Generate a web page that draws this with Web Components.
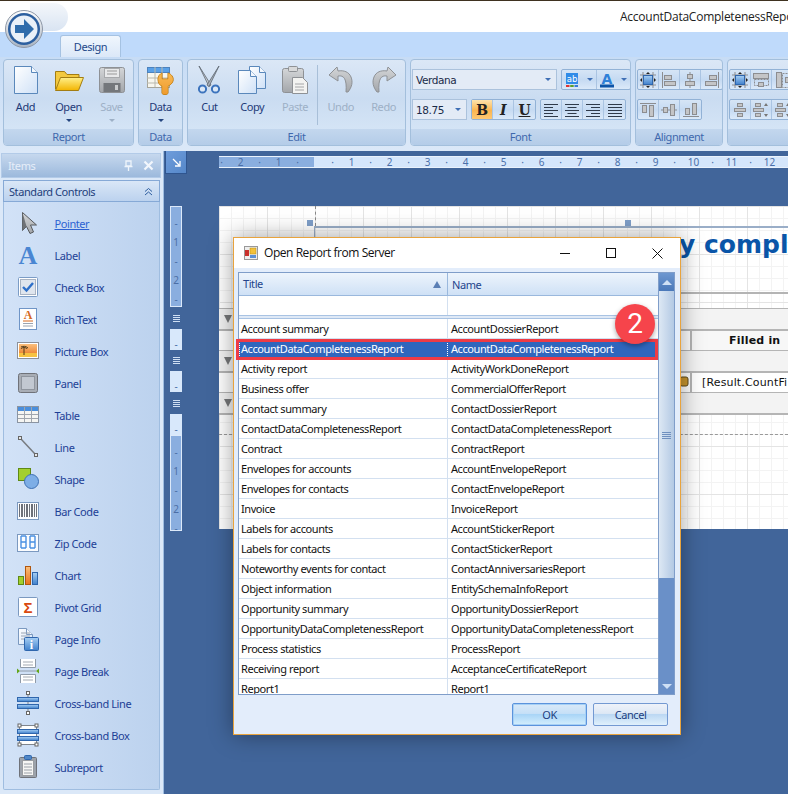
<!DOCTYPE html>
<html>
<head>
<meta charset="utf-8">
<title>Report designer</title>
<style>
  html, body { margin: 0; padding: 0; width: 788px; height: 794px; overflow: hidden; background: #41659a; }
  body { font: 11px "Noto Sans", sans-serif; letter-spacing: -.42px; }
</style>
</head>
<body>
<report-app></report-app>
<script>
const pageDefs = `<defs><linearGradient id="pg" x1="0" y1="0" x2="1" y2="1"><stop offset="0" stop-color="#fff"/><stop offset="1" stop-color="#cfe1f7"/></linearGradient><linearGradient id="gr" x1="0" y1="0" x2="0" y2="1"><stop offset="0" stop-color="#d4d6d8"/><stop offset="1" stop-color="#a3a6aa"/></linearGradient><linearGradient id="yl" x1="0" y1="0" x2="0" y2="1"><stop offset="0" stop-color="#fff08a"/><stop offset="1" stop-color="#f2b400"/></linearGradient><linearGradient id="bl" x1="0" y1="0" x2="0" y2="1"><stop offset="0" stop-color="#a8d0f5"/><stop offset="1" stop-color="#3f80cc"/></linearGradient><linearGradient id="or" x1="0" y1="0" x2="0" y2="1"><stop offset="0" stop-color="#fbbf7c"/><stop offset="1" stop-color="#e8721c"/></linearGradient></defs>`

const sv = (w, h, body) => `<svg xmlns="http://www.w3.org/2000/svg" width="${w}" height="${h}" viewBox="0 0 ${w} ${h}">${pageDefs}${body}</svg>`
const sheet = (x, y, w, h, s = '#5a88bb') => `<path d="M${x + .5} ${y + .5}h${w - 7}l6 6v${h - 7}h-${w - 1}z" fill="url(#pg)" stroke="${s}"/><path d="M${x + w - 6.5} ${y + .5}v6h6" fill="#f4f8fd" stroke="${s}"/>`
const box = (x, y, w, h, f = '#c4c5c7', s = '#8c8d90') => `<rect x="${x + .5}" y="${y + .5}" width="${w - 1}" height="${h - 1}" fill="${f}" stroke="${s}"/>`
const lines = (arr, x0 = 1, c = '#2f3a4a') => arr.map(([x, w], i) => `<rect x="${x0 + x}" y="${2 + i * 3}" width="${w}" height="1" fill="${c}"/>`).join('')
const dash = (x, y, w, h) => `<rect x="${x + .5}" y="${y + .5}" width="${w}" height="${h}" fill="none" stroke="#8c8d90" stroke-dasharray="2 1"/>`
const barLines = (c) => [2, 4, 5, 7, 9, 10, 12, 14, 15, 17, 19].map(x => `<rect x="${x + 1}" y="5" width="1" height="13" fill="${c}"/>`).join('')
const seg = (x) => `<path d="M${x} 5h5M${x} 11h5M${x} 17h5M${x} 5v12M${x + 5} 5v12" stroke="#4a90e2" stroke-width="1.4" fill="none"/>`

const ICONS = {
  add: sv(26, 30, sheet(1, 1, 24, 28)),
  open: sv(30, 26, `<path d="M1.5 22V4.5h9l2.5 3h12v3" fill="#f3c93f" stroke="#a37d12"/><path d="M6.5 10.5h23l-5 13h-23z" fill="url(#yl)" stroke="#a37d12"/>`),
  save: sv(28, 28, `<rect x="1.5" y="1.5" width="25" height="25" rx="2" fill="url(#gr)" stroke="#8e9195"/><rect x="6.5" y="2.5" width="15" height="9" fill="#e8e9ea" stroke="#a7a9ac"/><path d="M9 5h10M9 8h10" stroke="#999"/><rect x="5.5" y="17" width="17" height="9" fill="#74777b"/><rect x="17" y="19" width="3" height="5" fill="#c9cbcd"/>`),
  data: sv(30, 30, `<rect x="1.5" y="2.5" width="22" height="20" fill="#f8f7ef" stroke="#a6a59b"/><rect x="1.5" y="2.5" width="22" height="5" fill="#5aa1e8" stroke="#4d82bd"/><path d="M9 2v20M16 2v20M1 13h23M1 18h23" stroke="#b9b8ad"/><path d="M12 13c0-3 2-5 4-6v6h6V7c3 1 6 4 5 8-1 3-3 4-5 5v7c0 2-6 2-6 0v-7c-3-1-4-4-4-7z" fill="url(#or)" stroke="#b8720c" transform="translate(0 1)"/><path d="M12 13c0-3 2-5 4-6v6h6V7c3 1 6 4 5 8-1 3-3 4-5 5v7c0 2-6 2-6 0v-7c-3-1-4-4-4-7z" fill="#f5b63a" opacity=".6" transform="translate(0 1)"/>`),
  cut: sv(26, 30, `<path d="M3 1l12 19-2 1.500z" fill="#c9ced4" stroke="#5d6670" stroke-width=".8"/><path d="M23 1L11 20l2 1.500z" fill="#aab2bb" stroke="#5d6670" stroke-width=".8"/><circle cx="6.500" cy="24" r="3.600" fill="#dbe8f7" stroke="#3d74bd" stroke-width="2"/><circle cx="19.500" cy="24" r="3.600" fill="#dbe8f7" stroke="#3d74bd" stroke-width="2"/>`),
  copy: sv(30, 30, sheet(12, 1, 17, 23) + sheet(1, 5, 19, 24)),
  paste: sv(28, 30, `<rect x="1.500" y="3.500" width="21" height="24" rx="2" fill="url(#gr)" stroke="#8e9195"/><rect x="7.500" y="1.500" width="9" height="5" rx="1" fill="#d8d9da" stroke="#8e9195"/><path d="M11.500 12.500h10l5 5v11h-15z" fill="#f3f3f1" stroke="#8e9195"/><path d="M14 19h9M14 22h9M14 25h9" stroke="#a5a6a8"/>`),
  undo: sv(26, 28, `<path d="M9 1L1 9l9 6v-5c6-1 9 3 8 16h2c4-5 5-10 3-15-2-5-7-7-13-6z" fill="url(#gr)" stroke="#8e9195"/>`),
  redo: sv(26, 28, `<g transform="matrix(-1 0 0 1 26 0)"><path d="M9 1L1 9l9 6v-5c6-1 9 3 8 16h2c4-5 5-10 3-15-2-5-7-7-13-6z" fill="url(#gr)" stroke="#8e9195"/></g>`),

  pointer: sv(24, 24, `<path d="M6.500 1.500v18l4-4 3.500 7 3.500-1.500-3-7h6z" fill="url(#gr)" stroke="#55585c"/><path d="M6.500 1.500v18l4-4" fill="#6f7276"/>`),
  label: sv(24, 24, `<text x="12" y="21" text-anchor="middle" font-family="Liberation Serif, serif" font-weight="700" font-size="26" letter-spacing="0" fill="#4a86d2">A</text>`),
  check: sv(24, 24, `<rect x="2.500" y="2.500" width="19" height="19" rx="1" fill="#fff" stroke="#7b9cc6"/><rect x="4.500" y="4.500" width="15" height="15" fill="#dfe5ee" stroke="#a8b3c3"/><path d="M7 12l3.500 3.500L17 8" fill="none" stroke="#2d6fc9" stroke-width="2.400"/>`),
  rich: sv(24, 24, `<rect x="3.500" y="1.500" width="17" height="21" fill="#fff" stroke="#6f95c7"/><text x="12" y="12" text-anchor="middle" font-family="Liberation Serif, serif" font-weight="700" font-size="12" letter-spacing="0" fill="#d6691f">A</text><path d="M7 14h10" stroke="#d6691f"/><path d="M7 16.500h10M7 19h10" stroke="#9aa4b2"/>`),
  picture: sv(24, 24, `<rect x="1.500" y="3.500" width="21" height="16" fill="#fff" stroke="#8d9199"/><rect x="3" y="5" width="18" height="13" fill="url(#or)"/><rect x="3" y="14" width="18" height="4" fill="#f7c342"/><path d="M8 16V9M5 10c1-2 5-2 6 0M5 8c2-1 5-1 7 1" stroke="#4d3a1a" fill="none"/>`),
  panel: sv(24, 24, `<rect x="2.500" y="2.500" width="19" height="19" rx="2" fill="#a8adb5" stroke="#6f7279"/><rect x="5.500" y="5.500" width="13" height="13" fill="#c2c8d1" stroke="#8f959e"/>`),
  table: sv(24, 24, `<rect x="1.500" y="3.500" width="21" height="16" fill="#f5f5f2" stroke="#8a94a2"/><rect x="2" y="4" width="20" height="4" fill="#4a8fdd"/><path d="M8.500 4v15M15.500 4v15M2 11.500h20M2 15.500h20" stroke="#a0a6ae"/>`),
  line: sv(24, 24, `<path d="M5 4l14 15" stroke="#777b80" stroke-width="1.500"/><rect x="2.500" y="1.500" width="3" height="3" fill="#e8e8e8" stroke="#666"/><rect x="18.500" y="18.500" width="3" height="3" fill="#e8e8e8" stroke="#666"/>`),
  shape: sv(24, 24, `<rect x="2.500" y="1.500" width="12" height="12" fill="#a3cf2e" stroke="#5f8a14"/><circle cx="15.500" cy="14.500" r="7" fill="#7eaee6" stroke="#3e70b3"/>`),
  barcode: sv(24, 24, `<rect x="1.500" y="3.500" width="21" height="17" fill="#fbfcfe" stroke="#7b99c0"/>${barLines('#6d7078')}`),
  zip: sv(24, 24, `<rect x="1.500" y="3.500" width="21" height="17" fill="#fbfcfe" stroke="#7b99c0"/>${seg(5)}${seg(14)}`),
  chart: sv(24, 24, `<rect x="2.500" y="13.500" width="5" height="8" fill="#a3cf2e" stroke="#5f8a14"/><rect x="9.500" y="3.500" width="5" height="18" fill="url(#or)" stroke="#b0560e"/><rect x="16.500" y="9.500" width="5" height="12" fill="url(#bl)" stroke="#2f66ad"/>`),
  pivot: sv(24, 24, `<rect x="2.500" y="2.500" width="19" height="19" rx="1" fill="#fff" stroke="#7b99c0"/><text x="12" y="18" text-anchor="middle" font-family="Liberation Sans, sans-serif" font-weight="700" font-size="15" letter-spacing="0" fill="#d9480f">Σ</text>`),
  info: sv(24, 24, sheet(2, 1, 15, 17, '#7b99c0') + `<path d="M5 6h9M5 9h9M5 12h9" stroke="#9aa4b2"/><rect x="8.500" y="10.500" width="14" height="13" rx="1" fill="url(#bl)" stroke="#2f66ad"/><text x="15.500" y="21.500" text-anchor="middle" font-family="Liberation Serif, serif" font-weight="700" font-size="12" letter-spacing="0" fill="#fff">i</text>`),
  pagebreak: sv(24, 24, `<path d="M4.500 0v8.500h15V0" fill="#fff" stroke="#8f9aa8"/><path d="M7 3h10M7 6h10" stroke="#a3a9b1"/><path d="M4.500 24v-8.500h15V24" fill="#fff" stroke="#8f9aa8"/><path d="M7 18h10M7 21h10" stroke="#a3a9b1"/><path d="M1 9.500l3 2.500-3 2.500zM23 9.500l-3 2.500 3 2.500z" fill="#63a51a"/><path d="M4 12h16" stroke="#8f9aa8"/>`),
  crossline: sv(24, 24, `<path d="M12 3v18" stroke="#7f858d"/><rect x="10.500" y=".5" width="3" height="3" fill="#fff" stroke="#666"/><rect x="10.500" y="20.500" width="3" height="3" fill="#fff" stroke="#666"/><rect x="1.500" y="6.500" width="21" height="4" fill="url(#bl)" stroke="#2f66ad"/><rect x="1.500" y="13.500" width="21" height="4" fill="url(#bl)" stroke="#2f66ad"/>`),
  crossbox: sv(24, 24, `<path d="M3.500 2.500h17v19h-17z" fill="#fff" stroke="#7f858d"/><rect x="2" y="1" width="3" height="3" fill="#fff" stroke="#666"/><rect x="19" y="1" width="3" height="3" fill="#fff" stroke="#666"/><rect x="2" y="20" width="3" height="3" fill="#fff" stroke="#666"/><rect x="19" y="20" width="3" height="3" fill="#fff" stroke="#666"/><rect x="1.500" y="6.500" width="21" height="4" fill="url(#bl)" stroke="#2f66ad"/><rect x="1.500" y="13.500" width="21" height="4" fill="url(#bl)" stroke="#2f66ad"/>`),
  subreport: sv(24, 24, `<rect x="3.500" y="2.500" width="17" height="20" rx="1" fill="#9da3ab" stroke="#6f7279"/><rect x="6.500" y="5.500" width="11" height="15" fill="#f6f6f4" stroke="#9a9da1"/><rect x="8.500" y=".5" width="7" height="4" rx="1" fill="#4f86c6" stroke="#2f66ad"/><path d="M8 9h8M8 12h8M8 15h8M8 18h8" stroke="#9aa0a8"/>`),

  hilite: sv(16, 16, `<rect x="0" y="1" width="12" height="11" fill="#2f8be8"/><text x="6" y="9.500" text-anchor="middle" font-family="DejaVu Sans, sans-serif" font-size="8.500" letter-spacing="0" fill="#fff">ab</text><rect x="0" y="13" width="3.500" height="2" fill="#d33"/><rect x="4.200" y="13" width="3.500" height="2" fill="#5aa02c"/><rect x="8.500" y="13" width="3.500" height="2" fill="#3a7bd5"/>`),
  fontcolor: sv(16, 16, `<text x="7" y="11.500" text-anchor="middle" font-family="DejaVu Sans, sans-serif" font-weight="700" font-size="14" letter-spacing="0" fill="#2f80d8">A</text><rect x="0" y="12.500" width="14" height="3" fill="#0d54a8"/>`),
  left: sv(16, 16, lines([[0, 14], [0, 9], [0, 14], [0, 9], [0, 14]])),
  center: sv(16, 16, lines([[0, 14], [2.500, 9], [0, 14], [2.500, 9], [0, 14]])),
  right: sv(16, 16, lines([[0, 14], [5, 9], [0, 14], [5, 9], [0, 14]])),
  justify: sv(16, 16, lines([[0, 14], [0, 14], [0, 14], [0, 14], [0, 14]])),

  fit: sv(16, 16, `<path d="M3 0v16M13 0v16M0 3h16M0 13h16" stroke="#8c8d90"/><rect x="3.500" y="3.500" width="9" height="9" fill="url(#bl)" stroke="#2f66ad"/><path d="M8 0l-2 2h4zM8 16l-2-2h4zM0 8l2-2v4zM16 8l-2-2v4z" fill="#222"/>`),
  aleft: sv(16, 16, `<path d="M1.500 0v16" stroke="#8c8d90"/>${box(3, 3, 8, 5)}${box(3, 9, 12, 5)}`),
  acenter: sv(16, 16, `<path d="M8 0v16" stroke="#8c8d90"/>${box(5, 2, 6, 5)}${box(3, 9, 10, 5)}`),
  aright: sv(16, 16, `<path d="M14.500 0v16" stroke="#8c8d90"/>${box(5, 3, 8, 5)}${box(1, 9, 12, 5)}`),
  atop: sv(16, 16, `<path d="M0 1.500h16" stroke="#8c8d90"/>${box(2, 3, 5, 8)}${box(9, 3, 5, 12)}`),
  amid: sv(16, 16, `<path d="M0 8h16" stroke="#8c8d90"/>${box(2, 5, 5, 6)}${box(9, 2, 5, 12)}`),
  abottom: sv(16, 16, `<path d="M0 14.500h16" stroke="#8c8d90"/>${box(2, 6, 5, 7)}${box(9, 1, 5, 12)}`),
  samew: sv(16, 16, `${box(0, 1, 16, 6)}${dash(1, 7, 14, 6)}${box(5, 10, 6, 5)}`),
  sameh: sv(16, 16, `${box(1, 0, 6, 16)}${dash(7, 1, 7, 14)}${box(10, 5, 5, 6)}`),
  hs1: sv(16, 16, `${box(5, 1, 6, 4)}${box(2, 6, 12, 4)}${box(5, 11, 6, 4)}`),
  hs2: sv(16, 16, `${box(2, 1, 6, 4)}${box(0, 6, 11, 4)}${box(2, 11, 6, 4)}<path d="M13 1l-2 3h4zM13 15l-2-3h4z" fill="#777"/>`),
}

class XIcon extends HTMLElement {
  static tag = 'x-icon'
  constructor() {
    super()
    this.attachShadow({ mode: 'open' })
    this.shadowRoot.innerHTML = `<style>:host{display:inline-flex;align-items:center;justify-content:center;line-height:0}</style>${ICONS[this.getAttribute('name')] || ''}`
  }
}

class TitleBar extends HTMLElement {
  static tag = 'title-bar'
  static get style() {
    return /*css*/`
      :host { display: flex; height: 31px; background: #fff; border-top: 1px solid #3f3220; position: relative; align-items: center; padding-left: 620px; box-sizing: content-box; overflow: visible; }
      .text { font: 12px "Open Sans", sans-serif; letter-spacing: -.25px; color: #222; white-space: nowrap; overflow: hidden; }
      .glass { position: absolute; left: 30px; top: 2px; width: 38px; height: 28px; background: linear-gradient(#f4f7fb, #d9e4f2); border-radius: 0 16px 16px 0; }
      .orb { position: absolute; left: 5px; top: 9px; width: 38px; height: 38px; z-index: 2; }
    `
  }
  constructor() {
    super()
    this.attachShadow({ mode: 'open' })
    this.shadowRoot.innerHTML = /*html*/`
      <style>${TitleBar.style}</style>
      <div class="glass"></div>
      <svg class="orb" viewBox="0 0 38 38" width="38" height="38">
        <defs><linearGradient id="o" x1="0" y1="0" x2="0" y2="1"><stop offset="0" stop-color="#fff"/><stop offset="1" stop-color="#a9b4c2"/></linearGradient></defs>
        <circle cx="19" cy="19" r="18.500" fill="url(#o)" stroke="#8d97a6"/>
        <circle cx="19" cy="19" r="16" fill="#2c5f9f"/>
        <circle cx="19" cy="19" r="13.500" fill="#e9f0f8"/>
        <path d="M10 15h9V9l10 10-10 10v-6h-9z" fill="#2f6cab"/>
      </svg>
      <span class="text">AccountDataCompletenessReport</span>
    `
  }
}

class RibbonTabs extends HTMLElement {
  static tag = 'ribbon-tabs'
  constructor() {
    super()
    this.attachShadow({ mode: 'open' })
    this.shadowRoot.innerHTML = /*html*/`
      <style>
        :host { display: flex; height: 25px; background: #bfdafb; padding: 3px 0 0 60px; box-sizing: border-box; align-items: flex-end; }
        .tab { width: 61px; height: 22px; box-sizing: border-box; text-align: center; line-height: 21px; color: #23488a; background: linear-gradient(#f0f6fd, #dbe8f8); border: 1px solid #a5c2e2; border-bottom: 0; border-radius: 3px 3px 0 0; }
      </style>
      <div class="tab">Design</div>
    `
  }
}

class RibbonGroup extends HTMLElement {
  static tag = 'ribbon-group'
  constructor() {
    super()
    this.attachShadow({ mode: 'open' })
    this.shadowRoot.innerHTML = /*html*/`
      <style>
        :host { display: flex; flex-direction: column; flex: none; box-sizing: border-box; height: 87px; border: 1px solid #a3bfdc; border-radius: 4px; overflow: hidden; width: ${this.getAttribute('width')}px; background: linear-gradient(#dbe7f6 0, #cadcf1 45%, #d9e8f8 100%); }
        .body { flex: 1; display: flex; min-height: 0; padding: ${this.getAttribute('pad') || '0'}; }
        .cap { height: 16px; flex: none; background: linear-gradient(#c3d7ee, #b4cce8); text-align: center; line-height: 15px; color: #3f68ad; }
      </style>
      <div class="body"><slot></slot></div>
      <div class="cap">${this.getAttribute('label')}</div>
    `
  }
}

class RibbonButton extends HTMLElement {
  static tag = 'ribbon-button'
  constructor() {
    super()
    this.attachShadow({ mode: 'open' })
    const off = this.hasAttribute('disabled')
    this.shadowRoot.innerHTML = /*html*/`
      <style>
        :host { display: flex; flex-direction: column; align-items: center; width: ${this.getAttribute('width') || 43}px; padding-top: 5px; box-sizing: border-box; color: ${off ? '#9db0c6' : '#1e3a78'}; }
        .ic { height: 30px; display: flex; align-items: center; }
        .t { margin-top: 5px; line-height: 14px; }
        .a { margin-top: 5px; width: 0; height: 0; border: 3px solid transparent; border-top: 3px solid ${off ? '#9db0c6' : '#24457f'}; border-bottom: 0; }
      </style>
      <div class="ic"><x-icon name="${this.getAttribute('icon')}"></x-icon></div>
      <div class="t">${this.getAttribute('label')}</div>
      ${this.hasAttribute('arrow') ? '<div class="a"></div>' : ''}
    `
  }
}

class RibbonCombo extends HTMLElement {
  static tag = 'ribbon-combo'
  constructor() {
    super()
    this.attachShadow({ mode: 'open' })
    this.shadowRoot.innerHTML = /*html*/`
      <style>
        :host { display: flex; align-items: center; height: 21px; box-sizing: border-box; flex: none; width: ${this.getAttribute('width')}px; border: 1px solid #abc2dc; background: #e3ebf6; padding: 0 5px 0 3px; color: #1a2a48; font-family: "DejaVu Sans", sans-serif; letter-spacing: -.4px; }
        .v { flex: 1; font-size: 10.500px; }
        .a { width: 0; height: 0; border: 3px solid transparent; border-top: 3px solid #3f6fb5; border-bottom: 0; }
      </style>
      <span class="v">${this.getAttribute('value')}</span><span class="a"></span>
    `
  }
}

class ToolGroup extends HTMLElement {
  static tag = 'tool-group'
  constructor() {
    super()
    this.attachShadow({ mode: 'open' })
    this.shadowRoot.innerHTML = /*html*/`
      <style>
        :host { display: flex; flex: none; height: 21px; box-sizing: border-box; border: 1px solid #92b2d6; border-radius: 2px; background: linear-gradient(#d6e5f6, #c5daf2 50%, #dbe9f9); }
        ::slotted(tool-btn:not(:last-child)) { border-right: 1px solid #aac4e2; }
      </style>
      <slot></slot>
    `
  }
}

class ToolBtn extends HTMLElement {
  static tag = 'tool-btn'
  constructor() {
    super()
    this.attachShadow({ mode: 'open' })
    const w = this.getAttribute('width') || 21
    const caret = this.hasAttribute('caret') ? '<span class="a"></span>' : ''
    const glyph = this.getAttribute('glyph')
    this.shadowRoot.innerHTML = /*html*/`
      <style>
        :host { display: flex; align-items: center; justify-content: center; gap: 5px; width: ${w}px; flex: none; box-sizing: border-box; }
        :host([active]) { background: linear-gradient(#fde3ad, #fbb54f 55%, #fdc873); }
        .g { font: 700 14px "DejaVu Serif", "Liberation Serif", serif; color: #222; ${this.getAttribute('gs') || ''} }
        .a { width: 0; height: 0; border: 3px solid transparent; border-top: 3px solid #3f6fb5; border-bottom: 0; }
      </style>
      ${glyph ? `<span class="g">${glyph}</span>` : `<x-icon name="${this.getAttribute('icon')}"></x-icon>`}${caret}
    `
  }
}

class TheRibbon extends HTMLElement {
  static tag = 'the-ribbon'
  constructor() {
    super()
    this.attachShadow({ mode: 'open' })
    this.shadowRoot.innerHTML = /*html*/`
      <style>
        :host { display: flex; gap: 4px; height: 94px; box-sizing: border-box; padding: 2px 0 0 3px; overflow: hidden; background: linear-gradient(#c7dcf5, #dbe8f8); }
        .sep { width: 1px; margin: 5px 1px 4px 1px; background: #a8bfd8; flex: none; }
        .stack { display: flex; flex-direction: column; gap: 9px; padding: 9px 1px 0; }
        .row { display: flex; gap: 4px; }
      </style>
      <ribbon-group width="131" label="Report">
        <ribbon-button label="Add" icon="add"></ribbon-button>
        <ribbon-button label="Open" icon="open" arrow></ribbon-button>
        <ribbon-button label="Save" icon="save" arrow disabled></ribbon-button>
      </ribbon-group>
      <ribbon-group width="45" label="Data">
        <ribbon-button label="Data" icon="data" arrow></ribbon-button>
      </ribbon-group>
      <ribbon-group width="219" label="Edit">
        <ribbon-button label="Cut" icon="cut"></ribbon-button>
        <ribbon-button label="Copy" icon="copy"></ribbon-button>
        <ribbon-button label="Paste" icon="paste" disabled></ribbon-button>
        <div class="sep"></div>
        <ribbon-button label="Undo" icon="undo" disabled></ribbon-button>
        <ribbon-button label="Redo" icon="redo" disabled></ribbon-button>
      </ribbon-group>
      <ribbon-group width="221" label="Font">
        <div class="stack">
          <div class="row">
            <ribbon-combo width="145" value="Verdana"></ribbon-combo>
            <tool-group><tool-btn icon="hilite" width="35" caret></tool-btn><tool-btn icon="fontcolor" width="33" caret></tool-btn></tool-group>
          </div>
          <div class="row">
            <ribbon-combo width="55" value="18.75"></ribbon-combo>
            <tool-group><tool-btn glyph="B" active></tool-btn><tool-btn glyph="I" gs="font-style:italic"></tool-btn><tool-btn glyph="U" gs="text-decoration:underline"></tool-btn></tool-group>
            <tool-group><tool-btn icon="left"></tool-btn><tool-btn icon="center"></tool-btn><tool-btn icon="right"></tool-btn><tool-btn icon="justify"></tool-btn></tool-group>
          </div>
        </div>
      </ribbon-group>
      <ribbon-group width="88" label="Alignment">
        <div class="stack">
          <tool-group><tool-btn icon="fit"></tool-btn><tool-btn icon="aleft"></tool-btn><tool-btn icon="acenter"></tool-btn><tool-btn icon="aright"></tool-btn></tool-group>
          <div class="row"><tool-group><tool-btn icon="atop"></tool-btn><tool-btn icon="amid"></tool-btn><tool-btn icon="abottom"></tool-btn></tool-group></div>
        </div>
      </ribbon-group>
      <ribbon-group width="110" label="">
        <div class="stack">
          <tool-group><tool-btn icon="fit"></tool-btn><tool-btn icon="samew"></tool-btn><tool-btn icon="sameh"></tool-btn></tool-group>
          <tool-group><tool-btn icon="hs1"></tool-btn><tool-btn icon="hs2"></tool-btn><tool-btn icon="hs2"></tool-btn></tool-group>
        </div>
      </ribbon-group>
    `
  }
}

class ToolboxItem extends HTMLElement {
  static tag = 'toolbox-item'
  constructor() {
    super()
    this.attachShadow({ mode: 'open' })
    this.shadowRoot.innerHTML = /*html*/`
      <style>
        :host { display: flex; align-items: center; height: 32px; color: #1d3f96; }
        .ic { width: 24px; margin: 0 14.500px 0 12px; display: flex; }
        :host([current]) span { color: #2d62d2; text-decoration: underline; }
      </style>
      <div class="ic"><x-icon name="${this.getAttribute('icon')}"></x-icon></div><span><slot></slot></span>
    `
  }
}

class ToolboxPanel extends HTMLElement {
  static tag = 'toolbox-panel'
  static get items() {
    return [['pointer', 'Pointer'], ['label', 'Label'], ['check', 'Check Box'], ['rich', 'Rich Text'], ['picture', 'Picture Box'], ['panel', 'Panel'], ['table', 'Table'], ['line', 'Line'], ['shape', 'Shape'], ['barcode', 'Bar Code'], ['zip', 'Zip Code'], ['chart', 'Chart'], ['pivot', 'Pivot Grid'], ['info', 'Page Info'], ['pagebreak', 'Page Break'], ['crossline', 'Cross-band Line'], ['crossbox', 'Cross-band Box'], ['subreport', 'Subreport']]
  }
  constructor() {
    super()
    this.attachShadow({ mode: 'open' })
    const rows = ToolboxPanel.items.map(([ic, t], i) => `<toolbox-item icon="${ic}" ${i === 0 ? 'current' : ''}>${t}</toolbox-item>`).join('')
    this.shadowRoot.innerHTML = /*html*/`
      <style>
        :host { display: flex; flex-direction: column; flex: none; width: 164px; height: 100%; box-sizing: border-box; padding: 2px 2px 4px 1px; background: #dbe8f8; border-right: 1px solid #9fbde0; }
        .head { height: 25px; flex: none; display: flex; align-items: center; padding: 0 6px; color: #e6eef9; font-size: 11px; background: linear-gradient(#c6d8ee, #9cb9dc); border: 1px solid #b3cbe8; box-sizing: border-box; }
        .head span { flex: 1; }
        .head svg { margin-left: 9px; }
        .std { height: 22px; flex: none; margin: 2px 1px 0 2px; display: flex; align-items: center; padding: 0 6px 0 5px; box-sizing: border-box; color: #1e3f7c; background: linear-gradient(#dae7f7, #bcd2ee); border: 1px solid #86a9d6; }
        .std span { flex: 1; }
        .list { flex: 1; margin: 0 1px 0 2px; padding-top: 5px; box-sizing: border-box; border: 1px solid #9fbde0; border-top: 0; border-radius: 0 0 2px 2px; background: linear-gradient(90deg, #d2e2f7, #bcd2ee); }
      </style>
      <div class="head"><span>Items</span>
        <svg width="11" height="11" viewBox="0 0 11 11"><path d="M3 1h5v5H3zM1.500 6.500h8M5.500 7v4" fill="none" stroke="#eef4fb" stroke-width="1.300"/></svg>
        <svg width="11" height="11" viewBox="0 0 11 11"><path d="M1.500 1.500l8 8M9.500 1.500l-8 8" stroke="#f2f6fc" stroke-width="2.200"/></svg>
      </div>
      <div class="std"><span>Standard Controls</span>
        <svg width="9" height="9" viewBox="0 0 9 9"><path d="M1 4.500l3.500-3 3.500 3M1 8l3.500-3 3.500 3" fill="none" stroke="#2d5d9f"/></svg>
      </div>
      <div class="list">${rows}</div>
    `
  }
}

class HRuler extends HTMLElement {
  static tag = 'h-ruler'
  constructor() {
    super()
    this.attachShadow({ mode: 'open' })
    const cell = (t) => `<i>${t}</i>`
    const before = ['·', '2', '·', '1', '·'].map(cell).join('')
    let after = ''
    for (let n = 1; n <= 12; n++) after += cell('·') + cell(n)
    this.shadowRoot.innerHTML = /*html*/`
      <style>
        :host { display: flex; height: 12px; flex: none; overflow: hidden; box-sizing: border-box; border-top: 1px solid #eaf2fc; border-bottom: 1px solid #eaf2fc; font: 10px "Noto Sans", sans-serif; color: #4a6ea8; letter-spacing: 0; }
        .a { width: 95px; flex: none; display: flex; justify-content: flex-end; padding-right: 7px; box-sizing: border-box; background: #8aaedf; color: #4c6ea6; }
        .b { flex: 1; display: flex; padding-left: 9px; background: #d5e6fb; }
        i { font-style: normal; width: 19px; flex: none; text-align: center; line-height: 10px; }
      </style>
      <div class="a">${before}</div><div class="b">${after}</div>
    `
  }
}

class VRuler extends HTMLElement {
  static tag = 'v-ruler'
  constructor() {
    super()
    this.attachShadow({ mode: 'open' })
    const marks = ['-', '1', '-', '2', '-'].map(t => `<i>${t}</i>`).join('')
    const grip = `<div class="grip"><b></b><b></b><b></b><b></b></div>`
    this.shadowRoot.innerHTML = /*html*/`
      <style>
        :host { display: flex; flex-direction: column; width: 12px; flex: none; font: 10px "Noto Sans", sans-serif; color: #4c6ea6; }
        .blue { background: #8aaedf; box-sizing: border-box; border: 1px solid #dce9f9; display: flex; flex-direction: column; }
        i { font-style: normal; height: 19px; flex: none; text-align: center; line-height: 19px; }
        .lite { height: 21px; background: #d8e8fb; text-align: center; line-height: 30px; }
        .grip { height: 22px; display: flex; flex-direction: column; gap: 1px; align-items: center; justify-content: center; }
        .grip.s { height: 21px; }
        .grip b { width: 7px; height: 1px; background: #cfdff3; }
      </style>
      <div class="blue" style="height:101px;padding-top:7px">${marks}</div>
      ${grip}
      <div class="lite">-</div>
      <div class="grip s"><b></b><b></b><b></b><b></b></div>
      <div class="lite">-</div>
      ${grip}
      <div class="lite">-</div>
      <div class="blue" style="height:96px;padding-top:7px">${marks}</div>
    `
  }
}

class ReportPage extends HTMLElement {
  static tag = 'report-page'
  static get style() {
    return /*css*/`
      :host { display: block; flex: 1; height: 323px; position: relative; overflow: hidden; background-color: #fff; background-image:
        linear-gradient(90deg, #e4e4e4 1px, transparent 1px), linear-gradient(#e4e4e4 1px, transparent 1px),
        linear-gradient(90deg, #f3f3f3 1px, transparent 1px), linear-gradient(#f3f3f3 1px, transparent 1px);
        background-size: 48px 48px, 48px 48px, 12px 12px, 12px 12px; }
      .titlebox { position: absolute; left: 95px; top: 20px; right: -4px; height: 68px; box-sizing: border-box; border: 1px solid #9aaec8; border-bottom: 2px solid #b4b4b4; border-top-width: 2px; }
      .title { position: absolute; left: 460px; top: 21px; font: 700 25px/36px "DejaVu Sans", sans-serif; letter-spacing: 0; color: #0a55a8; white-space: nowrap; }
      .h { position: absolute; width: 6px; height: 6px; top: 14px; background: #7f9fc9; }
      .dash { position: absolute; left: 96px; top: 0; height: 20px; border-left: 1px dashed #888; }
      .bands { position: absolute; left: 0; right: 0; top: 102px; }
      .band { height: 20px; background: #f3f3f3; border-top: 1px solid #b5b5b5; position: relative; }
      .tri { position: absolute; left: 5px; top: 6px; width: 0; height: 0; border: 4px solid transparent; border-top: 8px solid #77787a; border-bottom: 0; }
      .row { background: #fff; border-top: 2px solid #b5b5b5; box-sizing: border-box; padding-left: 471px; display: flex; height: 21px; }
      .cell { flex: 1; border-left: 2px solid #b5b5b5; font: 11px/19px "DejaVu Sans", sans-serif; color: #111; white-space: nowrap; }
      .hd { font-weight: 700; letter-spacing: .2px; padding-left: 37px; background: #f7f7f7; }
      .dt { padding-left: 10px; letter-spacing: .15px; }
      .db { position: absolute; left: 460px; top: 3px; }
      .end { height: 0; border-top: 2px solid #b5b5b5; }
      .dashed { position: absolute; left: 0; right: 0; top: 228px; border-top: 1px dashed #999; }
    `
  }
  constructor() {
    super()
    this.attachShadow({ mode: 'open' })
    this.shadowRoot.innerHTML = /*html*/`
      <style>${ReportPage.style}</style>
      <div class="dash"></div>
      <div class="h" style="left:88px"></div><div class="h" style="left:406px"></div>
      <div class="titlebox"></div>
      <div class="title">y compl</div>
      <div class="bands">
        <div class="band"><i class="tri"></i></div>
        <div class="row"><div class="cell hd">Filled in</div></div>
        <div class="band"><i class="tri"></i></div>
        <div class="row" style="position:relative">
          <svg class="db" width="10" height="11" viewBox="0 0 10 11"><rect x="1" y="1" width="8" height="9" rx="2" fill="#c9962e" stroke="#5d4a1c"/></svg>
          <div class="cell dt">[Result.CountFi</div>
        </div>
        <div class="band"><i class="tri"></i></div>
        <div class="end"></div>
      </div>
      <div class="dashed"></div>
    `
  }
}

class DesignSurface extends HTMLElement {
  static tag = 'design-surface'
  constructor() {
    super()
    this.attachShadow({ mode: 'open' })
    this.shadowRoot.innerHTML = /*html*/`
      <style>
        :host { display: block; flex: 1; min-width: 0; background: #41659a; overflow: hidden; }
        .top { display: flex; height: 23px; padding-left: 1px; }
        .corner { width: 22px; height: 23px; box-sizing: border-box; flex: none; background: linear-gradient(135deg, #6e9cdb, #5587c9); border: 1px solid #2f558f; border-top: 0; display: flex; align-items: center; justify-content: center; }
        .top h-ruler { flex: 1; margin: 5px 0 0 32px; }
        .body { display: flex; margin-top: 32px; padding-left: 6px; gap: 37px; }
      </style>
      <div class="top">
        <div class="corner"><svg width="9" height="9" viewBox="0 0 9 9"><path d="M1 1l6 6M8 3v5H3" fill="none" stroke="#fff" stroke-width="1.300"/></svg></div>
        <h-ruler></h-ruler>
      </div>
      <div class="body"><v-ruler></v-ruler><report-page></report-page></div>
    `
  }
}

class GridRow extends HTMLElement {
  static tag = 'grid-row'
  constructor() {
    super()
    this.attachShadow({ mode: 'open' })
    this.shadowRoot.innerHTML = /*html*/`
      <style>
        :host { display: flex; height: 20px; box-sizing: border-box; border-bottom: 1px solid #d3e0f0; line-height: 19px; color: #111; flex: none; }
        :host([selected]) { background: #2f66bd; color: #fff; border-bottom-color: #2f66bd; }
        div { overflow: hidden; white-space: nowrap; box-sizing: border-box; }
        .a { width: 209px; padding-left: 2px; border-right: 1px solid #d3e0f0; }
        .b { flex: 1; padding-left: 3px; }
        :host([selected]) .a { border-left: 1px dotted #fff; padding-left: 1px; border-right: 1px dotted #fff; }
      </style>
      <div class="a">${this.getAttribute('title')}</div><div class="b">${this.getAttribute('name')}</div>
    `
  }
}

class DialogButton extends HTMLElement {
  static tag = 'dialog-button'
  constructor() {
    super()
    this.attachShadow({ mode: 'open' })
    this.shadowRoot.innerHTML = /*html*/`
      <style>
        :host { display: block; width: 75px; height: 23px; box-sizing: border-box; border: 1px solid #7399d2; border-radius: 2px; text-align: center; line-height: 21px; color: #22407f; background: linear-gradient(#eef2f9, #dde8f5 45%, #bcd8f3 50%, #dff0fc); }
        :host([primary]) { border: 1px solid #5b93dc; box-shadow: inset 0 0 0 1px #a6d0f5; background: linear-gradient(#d9e9f8, #c6e0f7 45%, #a9d5f7 50%, #d4effd); }
      </style>
      <slot></slot>
    `
  }
}

class ReportDialog extends HTMLElement {
  static tag = 'report-dialog'
  static get rows() {
    return [['Account summary', 'AccountDossierReport'], ['AccountDataCompletenessReport', 'AccountDataCompletenessReport'], ['Activity report', 'ActivityWorkDoneReport'], ['Business offer', 'CommercialOfferReport'], ['Contact summary', 'ContactDossierReport'], ['ContactDataCompletenessReport', 'ContactDataCompletenessReport'], ['Contract', 'ContractReport'], ['Envelopes for accounts', 'AccountEnvelopeReport'], ['Envelopes for contacts', 'ContactEnvelopeReport'], ['Invoice', 'InvoiceReport'], ['Labels for accounts', 'AccountStickerReport'], ['Labels for contacts', 'ContactStickerReport'], ['Noteworthy events for contact', 'ContactAnniversariesReport'], ['Object information', 'EntitySchemaInfoReport'], ['Opportunity summary', 'OpportunityDossierReport'], ['OpportunityDataCompletenessReport', 'OpportunityDataCompletenessReport'], ['Process statistics', 'ProcessReport'], ['Receiving report', 'AcceptanceCertificateReport'], ['Report1', 'Report1']]
  }
  static get style() {
    return /*css*/`
      :host { position: absolute; left: 233px; top: 237px; width: 448px; height: 498px; box-sizing: border-box; border: 1px solid #e8a33d; background: #e3edfb; box-shadow: 0 0 22px rgba(0, 0, 0, .38); display: flex; flex-direction: column; z-index: 5; }
      .cap { height: 30px; flex: none; background: #fff; display: flex; align-items: center; padding-left: 10px; font: 12px "Open Sans", sans-serif; letter-spacing: -.45px; color: #111; }
      .cap .t { flex: 1; margin: -1px 0 0 6px; }
      .win { width: 46px; height: 30px; display: flex; align-items: center; justify-content: center; }
      .grid { margin: 4px 5px 0 4px; height: 423px; flex: none; box-sizing: border-box; border: 1px solid #7f9dc9; display: flex; background: #fff; }
      .table { flex: 1; min-width: 0; display: flex; flex-direction: column; overflow: hidden; }
      .head { height: 23px; flex: none; display: flex; box-sizing: border-box; background: linear-gradient(#edf4fc, #cfe1f6); border-bottom: 1px solid #9ab8dd; color: #24458c; line-height: 24px; }
      .head div { box-sizing: border-box; }
      .head .a { width: 209px; padding-left: 4px; border-right: 1px solid #9ab8dd; display: flex; align-items: center; justify-content: space-between; padding-right: 6px; }
      .head .a i { width: 0; height: 0; border: 4px solid transparent; border-bottom: 7px solid #5b7fb5; border-top: 0; }
      .head .b { padding-left: 4px; }
      .filter { height: 19px; flex: none; box-sizing: border-box; }
      .filter div { width: 209px; height: 100%; box-sizing: border-box; border-right: 1px solid #d3e0f0; }
      .dbl { height: 4px; flex: none; box-sizing: border-box; background: #dfe9f6; border-top: 1px solid #a9c3e3; border-bottom: 1px solid #a9c3e3; }
      .sb { width: 16px; flex: none; display: flex; flex-direction: column; border-left: 1px solid #7f9dc9; box-sizing: border-box; }
      .up { height: 18px; background: linear-gradient(#6d97d0, #4a78b9); display: flex; align-items: center; justify-content: center; flex: none; }
      .up i { border: 5px solid transparent; border-bottom: 5px solid #cfe0f5; border-top: 0; }
      .thumb { height: 287px; flex: none; background: linear-gradient(90deg, #dde8f4, #b3c9e4); display: flex; flex-direction: column; gap: 1px; align-items: center; padding-top: 141px; box-sizing: border-box; }
      .thumb b { width: 9px; height: 1px; background: #6f90bf; flex: none; }
      .track { flex: 1; background: #6a90c8; display: flex; align-items: flex-end; justify-content: center; padding-bottom: 5px; }
      .track i { border: 5px solid transparent; border-top: 5px solid #cfe0f5; border-bottom: 0; }
      .foot { display: flex; justify-content: flex-end; gap: 6px; padding: 8px 12px 0 0; }
      .mark { position: absolute; left: 2px; top: 101px; width: 422px; height: 21px; box-sizing: border-box; border: 3px solid #ee3b45; }
      .badge { position: absolute; left: 381px; top: 66px; width: 40px; height: 40px; border-radius: 50%; background: #f6444b; color: #fff; font: 28px/40px "Roboto", sans-serif; letter-spacing: 0; text-align: center; box-shadow: 0 2px 5px rgba(0, 0, 0, .35); }
    `
  }
  constructor() {
    super()
    this.attachShadow({ mode: 'open' })
    const rows = ReportDialog.rows.map((r, i) => `<grid-row title="${r[0]}" name="${r[1]}" ${i === 1 ? 'selected' : ''}></grid-row>`).join('')
    this.shadowRoot.innerHTML = /*html*/`
      <style>${ReportDialog.style}</style>
      <div class="cap">
        <svg width="14" height="14" viewBox="0 0 14 14"><rect x=".5" y=".5" width="13" height="13" fill="#eee" stroke="#999"/><rect x="1" y="4" width="4" height="6" fill="#c9302c"/><rect x="6" y="2" width="6" height="6" fill="#f3c13a" stroke="#b58a12" stroke-width=".5"/><rect x="6" y="9" width="6" height="3" fill="#5b8fd6"/></svg>
        <span class="t">Open Report from Server</span>
        <div class="win"><svg width="10" height="10"><rect x="0" y="5" width="10" height="1" fill="#111"/></svg></div>
        <div class="win"><svg width="10" height="10"><rect x=".5" y=".5" width="9" height="9" fill="none" stroke="#111"/></svg></div>
        <div class="win"><svg width="11" height="11"><path d="M.5.5l10 10M10.500.5l-10 10" stroke="#111"/></svg></div>
      </div>
      <div class="grid">
        <div class="table">
          <div class="head"><div class="a">Title<i></i></div><div class="b">Name</div></div>
          <div class="filter"><div></div></div>
          <div class="dbl"></div>
          ${rows}
        </div>
        <div class="sb">
          <div class="up"><i></i></div>
          <div class="thumb"><b></b><b></b><b></b><b></b></div>
          <div class="track"><i></i></div>
        </div>
      </div>
      <div class="foot"><dialog-button primary>OK</dialog-button><dialog-button>Cancel</dialog-button></div>
      <div class="mark"></div>
      <div class="badge">2</div>
    `
  }
}

class ReportApp extends HTMLElement {
  static tag = 'report-app'
  constructor() {
    super()
    this.attachShadow({ mode: 'open' })
    this.shadowRoot.innerHTML = /*html*/`
      <style>
        :host { display: flex; flex-direction: column; width: 788px; height: 794px; position: relative; overflow: hidden; }
        .main { flex: 1; min-height: 0; display: flex; }
      </style>
      <title-bar></title-bar>
      <ribbon-tabs></ribbon-tabs>
      <the-ribbon></the-ribbon>
      <div class="main"><toolbox-panel></toolbox-panel><design-surface></design-surface></div>
      <report-dialog></report-dialog>
    `
  }
}

for (const c of [XIcon, TitleBar, RibbonTabs, RibbonGroup, RibbonButton, RibbonCombo, ToolGroup, ToolBtn, TheRibbon, ToolboxItem, ToolboxPanel, HRuler, VRuler, ReportPage, DesignSurface, GridRow, DialogButton, ReportDialog, ReportApp]) {
  customElements.define(c.tag, c)
}
</script>
</body>
</html>
